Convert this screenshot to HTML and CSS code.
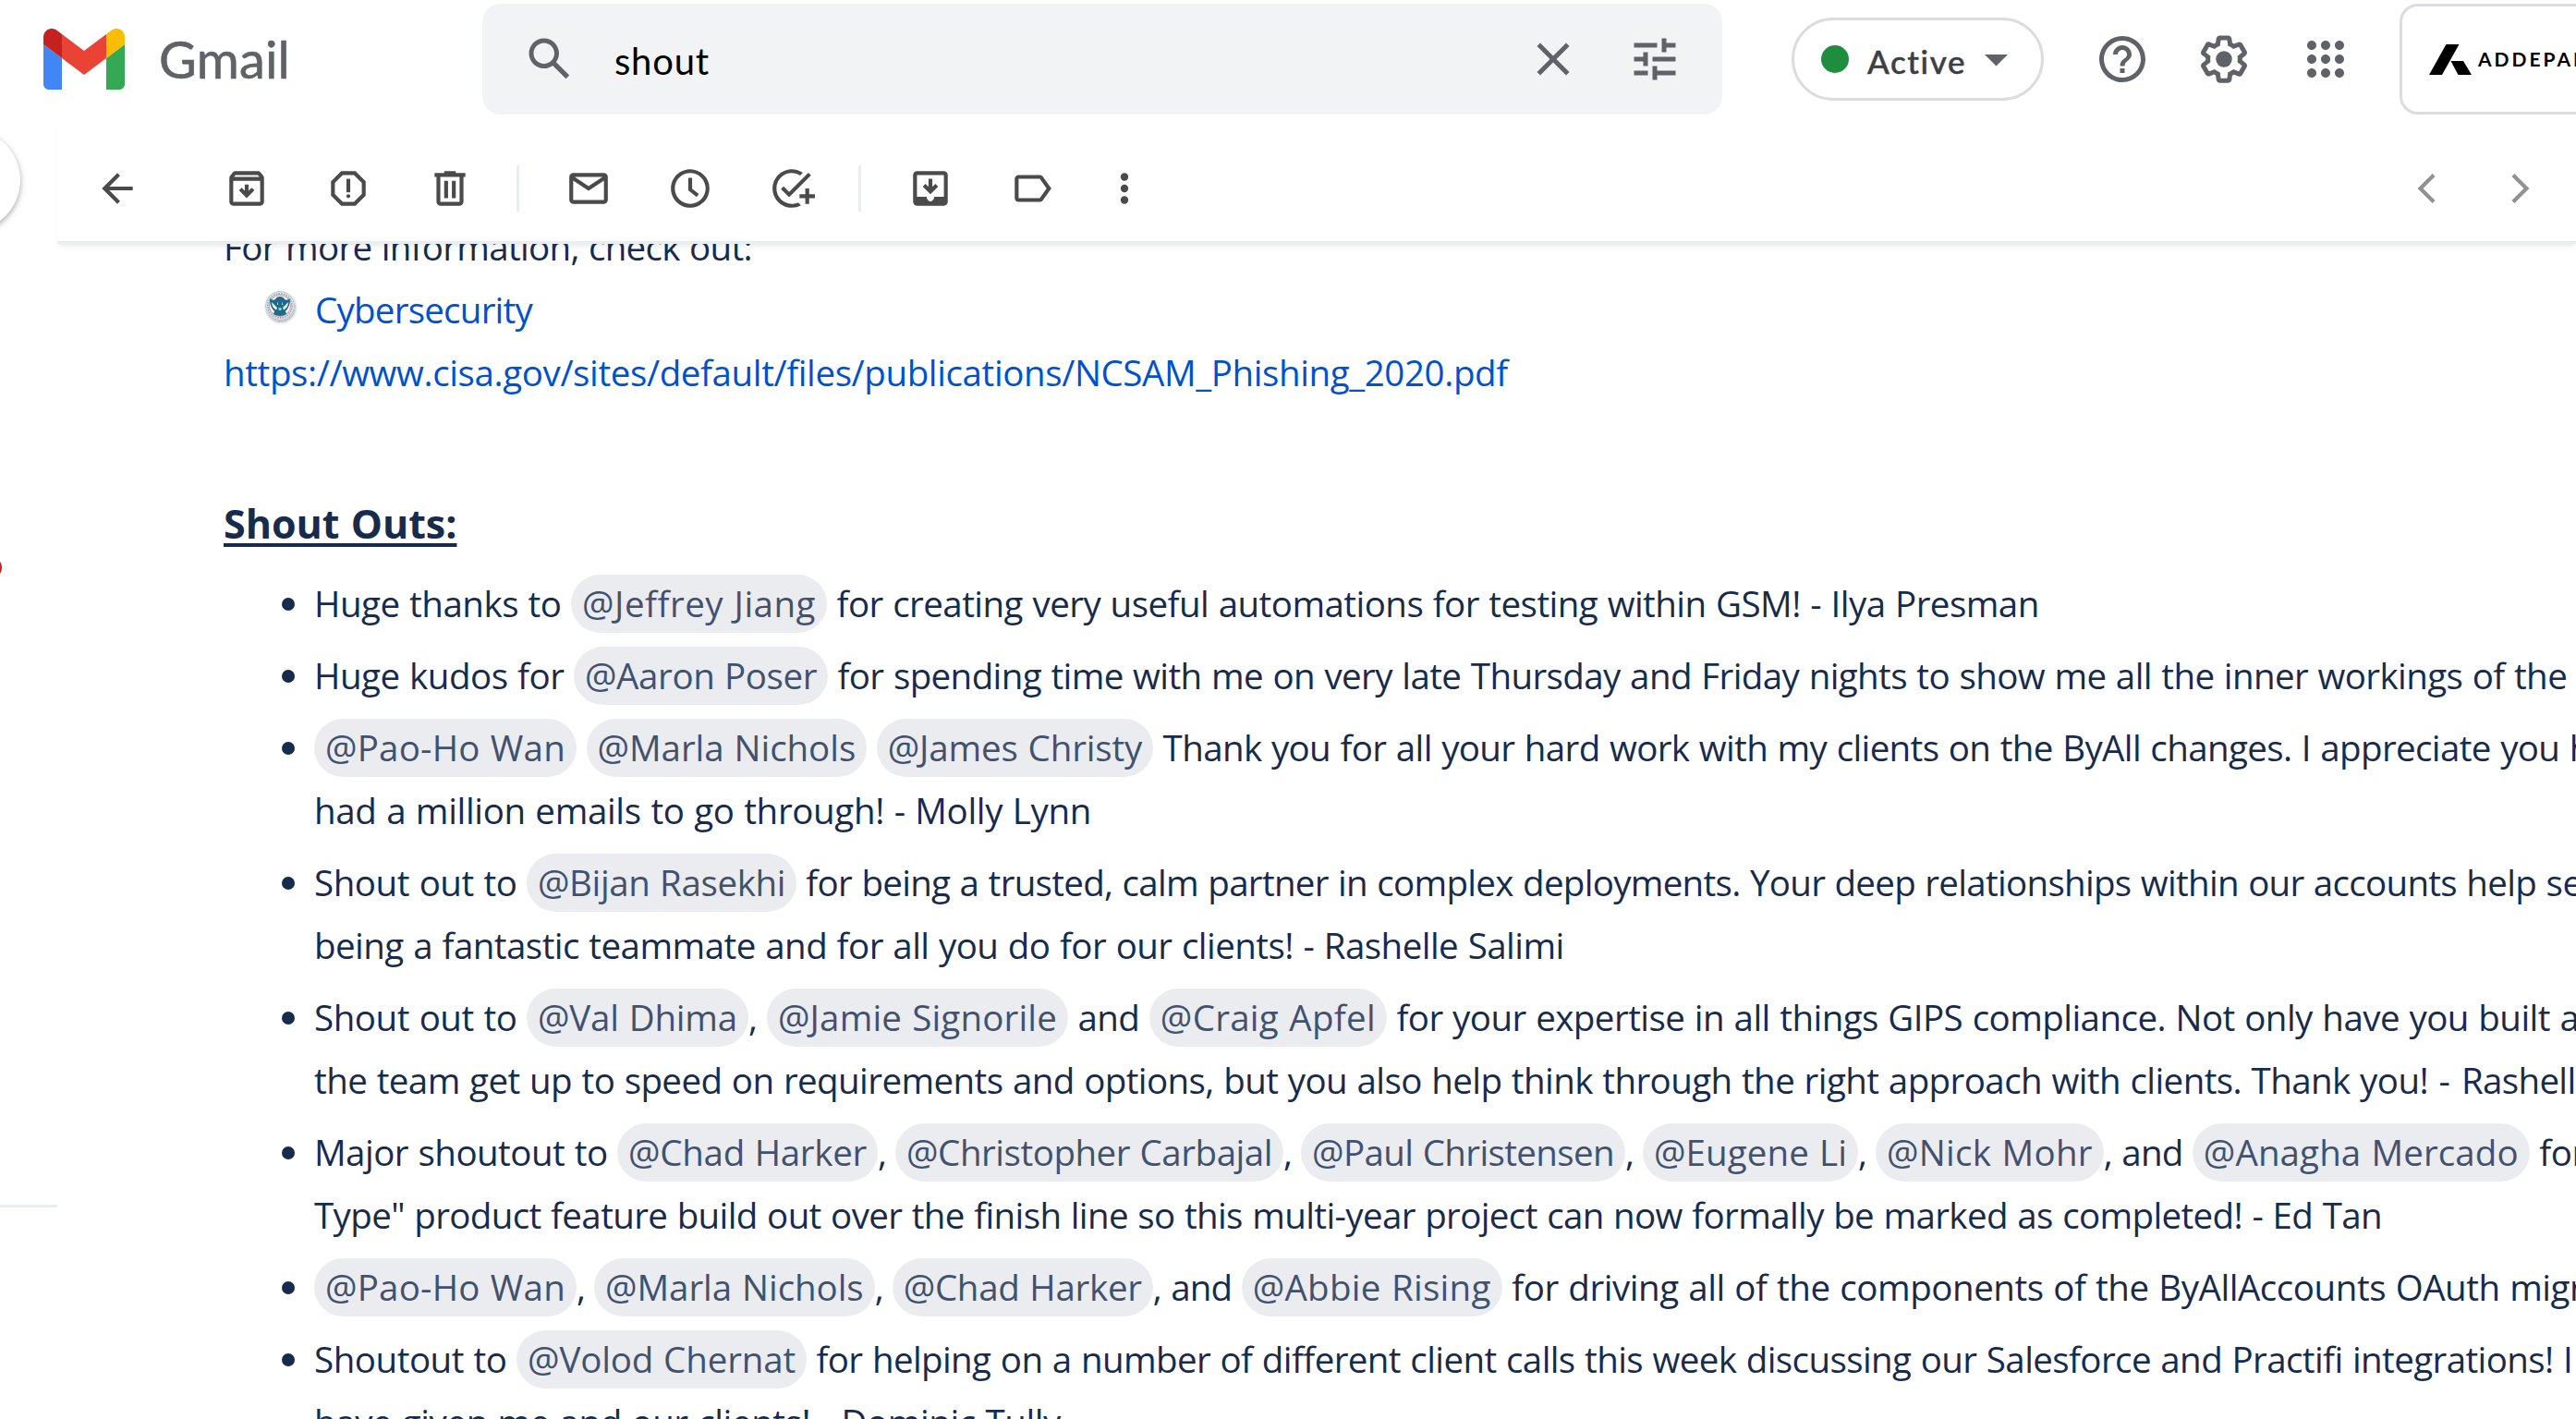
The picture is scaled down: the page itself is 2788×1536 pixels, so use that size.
FILE: index.html
```html
<!DOCTYPE html>
<html lang="en">
<head>
<meta charset="utf-8">
<title>Gmail</title>
<link rel="stylesheet" href="styles.css">
</head>
<body>
<header class="topbar">
  <div class="brand">
    <svg class="brand-mark" viewBox="52 42 88 66"><path fill="#4285f4" d="M58 108h14V74L52 59v43c0 3.32 2.69 6 6 6"/><path fill="#34a853" d="M120 108h14c3.32 0 6-2.69 6-6V59l-20 15"/><path fill="#fbbc04" d="M120 48v26l20-15v-8c0-7.42-8.47-11.65-14.4-7.2"/><path fill="#ea4335" d="M72 74V48l24 18 24-18v26L96 92"/><path fill="#c5221f" d="M52 51v8l20 15V48l-5.6-4.2c-5.94-4.45-14.4-.22-14.4 7.2"/></svg>
    <span class="brand-name">Gmail</span>
  </div>
  <div class="search">
    <svg class="icon" viewBox="0 0 24 24"><path d="M20.49 19l-5.73-5.73C15.53 12.2 16 10.91 16 9.5 16 5.91 13.09 3 9.5 3S3 5.91 3 9.5 5.91 16 9.5 16c1.41 0 2.7-.47 3.77-1.24L19 20.49 20.49 19zM5 9.5C5 7.01 7.01 5 9.5 5S14 7.01 14 9.5 11.99 14 9.5 14 5 11.99 5 9.5z"/></svg>
    <div class="search-text">shout</div>
    <svg class="icon" viewBox="0 0 24 24"><path d="M19 6.41L17.59 5 12 10.59 6.41 5 5 6.41 10.59 12 5 17.59 6.41 19 12 13.41 17.59 19 19 17.59 13.41 12z"/></svg>
    <svg class="icon" viewBox="0 0 24 24"><path d="M3 17v2h6v-2H3zM3 5v2h10V5H3zm10 16v-2h8v-2h-8v-2h-2v6h2zM7 9v2H3v2h4v2h2V9H7zm14 4v-2H11v2h10zm-6-4h2V7h4V5h-4V3h-2v6z"/></svg>
  </div>
  <div class="status"><i class="status-dot"></i><span class="status-text">Active</span><svg class="status-caret" viewBox="0 0 10 5"><path d="M0 0h10L5 5z"/></svg></div>
  <nav class="tools">
    <svg class="icon" viewBox="0 0 24 24"><path d="M11 18h2v-2h-2v2zm1-16C6.48 2 2 6.48 2 12s4.48 10 10 10 10-4.48 10-10S17.52 2 12 2zm0 18c-4.41 0-8-3.59-8-8s3.59-8 8-8 8 3.59 8 8-3.59 8-8 8zm0-14c-2.21 0-4 1.79-4 4h2c0-1.1.9-2 2-2s2 .9 2 2c0 2-3 1.75-3 5h2c0-2.25 3-2.5 3-5 0-2.21-1.79-4-4-4z"/></svg>
    <svg class="icon" viewBox="0 0 24 24"><path d="M13.85 22.25h-3.7c-.74 0-1.36-.54-1.45-1.27l-.27-1.89c-.27-.14-.53-.29-.79-.46l-1.8.72c-.7.26-1.47-.03-1.81-.65L2.2 15.53c-.35-.66-.2-1.44.36-1.88l1.53-1.19c-.01-.15-.02-.3-.02-.46 0-.15.01-.31.02-.46l-1.52-1.19c-.59-.45-.74-1.26-.37-1.88l1.85-3.19c.34-.62 1.11-.9 1.79-.63l1.81.73c.26-.17.52-.32.78-.46l.27-1.91c.09-.7.71-1.25 1.44-1.25h3.7c.74 0 1.36.54 1.45 1.27l.27 1.89c.27.14.53.29.79.46l1.8-.72c.71-.26 1.48.03 1.82.65l1.84 3.18c.36.66.2 1.44-.36 1.88l-1.52 1.19c.01.15.02.3.02.46s-.01.31-.02.46l1.52 1.19c.56.45.72 1.23.37 1.86l-1.86 3.22c-.34.62-1.11.9-1.8.63l-1.8-.72c-.26.17-.52.32-.78.46l-.27 1.91c-.1.68-.72 1.22-1.46 1.22zm-3.23-2h2.76l.37-2.55.53-.22c.44-.18.88-.44 1.34-.78l.45-.34 2.38.96 1.38-2.4-2.03-1.58.07-.56c.03-.26.06-.51.06-.78s-.03-.53-.06-.78l-.07-.56 2.03-1.58-1.39-2.4-2.39.96-.45-.35c-.42-.32-.87-.58-1.33-.77l-.52-.22-.37-2.55h-2.76l-.37 2.55-.53.21c-.44.19-.88.44-1.34.79l-.45.33-2.38-.95-1.39 2.39 2.03 1.58-.07.56a7 7 0 0 0-.06.79c0 .26.02.53.06.78l.07.56-2.03 1.58 1.38 2.4 2.39-.96.45.35c.43.33.86.58 1.33.77l.53.22.38 2.55z"/><circle cx="12" cy="12" r="3.5"/></svg>
    <svg class="icon" viewBox="0 0 24 24"><path d="M6 8c1.1 0 2-.9 2-2s-.9-2-2-2-2 .9-2 2 .9 2 2 2zm6 12c1.1 0 2-.9 2-2s-.9-2-2-2-2 .9-2 2 .9 2 2 2zm-6 0c1.1 0 2-.9 2-2s-.9-2-2-2-2 .9-2 2 .9 2 2 2zm0-6c1.1 0 2-.9 2-2s-.9-2-2-2-2 .9-2 2 .9 2 2 2zm6 0c1.1 0 2-.9 2-2s-.9-2-2-2-2 .9-2 2 .9 2 2 2zm4-8c0 1.1.9 2 2 2s2-.9 2-2-.9-2-2-2-2 .9-2 2zm-4 2c1.1 0 2-.9 2-2s-.9-2-2-2-2 .9-2 2 .9 2 2 2zm6 6c1.1 0 2-.9 2-2s-.9-2-2-2-2 .9-2 2 .9 2 2 2zm0 6c1.1 0 2-.9 2-2s-.9-2-2-2-2 .9-2 2 .9 2 2 2z"/></svg>
  </nav>
  <div class="account">
    <svg class="account-mark" viewBox="0 0 46 33"><path d="M18.5 0H32.5L14 33H0z"/><path d="M23.5 18H37L46 33H31.5z"/></svg>
    <span class="account-name">ADDEPAR</span>
  </div>
</header>

<div class="shell">
  <aside class="rail">
    <i class="compose"></i>
    <i class="badge"></i>
    <i class="rail-line"></i>
  </aside>
  <main class="main">
    <div class="toolbar">
      <svg class="tool tool-back" viewBox="0 0 24 24"><path d="M20 11H7.83l5.59-5.59L12 4l-8 8 8 8 1.41-1.41L7.83 13H20v-2z"/></svg>
      <div class="group">
        <svg class="tool" viewBox="0 0 24 24"><path fill-rule="evenodd" d="M20.54 5.23l-1.39-1.68C18.88 3.21 18.47 3 18 3H6c-.47 0-.88.21-1.16.55L3.46 5.23C3.17 5.57 3 6.02 3 6.5V19c0 1.1.9 2 2 2h14c1.1 0 2-.9 2-2V6.5c0-.48-.17-.93-.46-1.27zM6.24 5h11.52l.83 1H5.42l.82-1zM5 19V8h14v11H5z"/><path d="M11 10h2v3.17l1.59-1.58L16 13l-4 4-4-4 1.41-1.41L11 13.17z"/></svg>
        <svg class="tool" viewBox="0 0 24 24"><path fill-rule="evenodd" d="M15.73 3H8.27L3 8.27v7.46L8.27 21h7.46L21 15.73V8.27L15.73 3zM19 14.9L14.9 19H9.1L5 14.9V9.1L9.1 5h5.8L19 9.1v5.8z"/><circle cx="12" cy="16" r="1"/><path d="M11 7h2v7h-2z"/></svg>
        <svg class="tool" viewBox="0 0 24 24"><path d="M15 4V3H9v1H4v2h1v13c0 1.1.9 2 2 2h10c1.1 0 2-.9 2-2V6h1V4h-5zm2 15H7V6h10v13zM9 8h2v9H9zm4 0h2v9h-2z"/></svg>
      </div>
      <div class="group">
        <svg class="tool" viewBox="0 0 24 24"><path d="M20 4H4c-1.1 0-2 .9-2 2v12c0 1.1.9 2 2 2h16c1.1 0 2-.9 2-2V6c0-1.1-.9-2-2-2zm-.8 2L12 10.8 4.8 6h14.4zM4 18V7.87l8 5.33 8-5.33V18H4z"/></svg>
        <svg class="tool" viewBox="0 0 24 24"><path d="M11.99 2C6.47 2 2 6.48 2 12s4.47 10 9.99 10C17.52 22 22 17.52 22 12S17.52 2 11.99 2zM12 20c-4.42 0-8-3.58-8-8s3.58-8 8-8 8 3.58 8 8-3.58 8-8 8zm1-13.500h-2V13l4.300 3.400 1.200-1.500-3.500-2.800z"/></svg>
        <svg class="tool" viewBox="0 0 24 24"><path d="M22 5.18L10.59 16.6l-4.24-4.24 1.41-1.41 2.83 2.83 10-10L22 5.18zM12 20c-4.41 0-8-3.59-8-8s3.59-8 8-8c1.57 0 3.04.46 4.28 1.25l1.45-1.45C16.1 2.67 14.13 2 12 2 6.48 2 2 6.48 2 12s4.48 10 10 10c1.73 0 3.36-.44 4.78-1.22l-1.5-1.5c-1 .46-2.11.72-3.28.72zm7-5h-3v2h3v3h2v-3h3v-2h-3v-3h-2v3z"/></svg>
      </div>
      <div class="group">
        <svg class="tool" viewBox="0 0 24 24"><path fill-rule="evenodd" d="M19 3H5c-1.1 0-2 .9-2 2v14c0 1.1.9 2 2 2h14c1.1 0 2-.9 2-2V5c0-1.1-.9-2-2-2zM5 5h14v11.300h-5c0 1.100-.9 2.400-2 2.400s-2-1.300-2-2.400H5z"/><path d="M11 7h2v4.170l1.590-1.580L16 11l-4 4-4-4 1.410-1.410L11 11.170z"/></svg>
        <svg class="tool" viewBox="0 0 24 24"><path fill-rule="evenodd" d="M3 7c0-1.1.9-2 2-2h11c.67 0 1.27.33 1.63.84L22 12l-4.37 6.16c-.36.51-.96.84-1.63.84H5c-1.1 0-2-.9-2-2V7zm2 0v10h11l3.55-5L16 7H5z"/></svg>
      </div>
      <svg class="tool tool-more" viewBox="0 0 24 24"><circle cx="12" cy="6" r="2"/><circle cx="12" cy="12" r="2"/><circle cx="12" cy="18" r="2"/></svg>
      <div class="pager">
        <svg class="tool" viewBox="0 0 24 24"><path d="M15.400 5L8.400 12l7 7"/></svg>
        <svg class="tool" viewBox="0 0 24 24"><path d="M8.600 5l7 7-7 7"/></svg>
      </div>
    </div>

    <article class="message">
      <p><span class="n70">For more information, check out:</span></p>
      <p class="linked"><svg class="seal" viewBox="0 0 32 32"><circle cx="16" cy="16" r="16" fill="#b9bec4"/><circle cx="16" cy="16" r="15" fill="#dfe6ea"/><circle cx="16" cy="16" r="13" fill="none" stroke="#8fb0c2" stroke-width="2" stroke-dasharray="1.500 1.200"/><circle cx="16" cy="16" r="11.500" fill="#fff" stroke="#e58a9a" stroke-width="1"/><path fill="#1c6a8c" d="M5 8c3 2 4 2 6 1 1-4 9-4 10 0 2 1 3 1 6-1 0 7-2 11-5 14l1 3c-4 2.500-10 2.500-14 0l1-3C7 19 5 15 5 8z"/><path fill="#f0f7fa" d="M7 12l6 6-1 2.500C9 19 7 16 7 12zM25 12l-6 6 1 2.500c3-1.500 5-4.500 5-8.500zM13 11l1 4h-1zM19 11l-1 4h1z"/><circle cx="16" cy="19.500" r="1.700" fill="#a9d18a"/></svg><a href="#" class="n76">Cybersecurity</a></p>
      <p><a href="#" class="n39">https://www.cisa.gov/sites/default/files/publications/NCSAM_Phishing_2020.pdf</a></p>
      <h2>Shout Outs:</h2>
      <ul class="shouts">
        <li><span class="n49">Huge thanks to </span><b class="p50">@Jeffrey Jiang</b><span class="n54"> for creating very useful automations for testing within GSM! - Ilya Presman</span></li>
        <li><span class="n49">Huge kudos for </span><b class="n39">@Aaron Poser</b><span class="n60"> for spending time with me on very late Thursday and Friday nights to show me all the inner workings of the</span></li>
        <li><b class="p20">@Pao-Ho Wan</b> <b class="n05">@Marla Nichols</b> <b class="n14">@James Christy</b><span class="n62"> Thank you for all your hard work with my clients on the ByAll changes. I appreciate you</span> h<br><span class="n35">had a million emails to go through! - Molly Lynn</span></li>
        <li><span class="n43">Shout out to </span><b class="n39">@Bijan Rasekhi</b><span class="n70"> for being a trusted, calm partner in complex deployments. Your deep relationships within our accounts help</span> se<br><span class="n54">being a fantastic teammate and for all you do for our clients! - Rashelle Salimi</span></li>
        <li><span class="n43">Shout out to </span><b class="n19">@Val Dhima</b><span class="n52">, </span><b class="p15">@Jamie Signorile</b><span class="n52"> and </span><b class="p28">@Craig Apfel</b><span class="n54"> for your expertise in all things GIPS compliance. Not only have you built</span> a<br><span class="n58">the team get up to speed on requirements and options, but you also help think through the right approach with clients. Thank you!</span><span class="p50"> - </span><span class="n66">Rashelle</span></li>
        <li><span class="n52">Major shoutout to </span><b class="n28">@Chad Harker</b><span class="n98">, </span><b class="n46">@Christopher Carbajal</b><span class="n98">, </span><b class="n62">@Paul Christensen</b><span class="n98">, </span><b class="p09">@Eugene Li</b><span class="n98">, </span><b class="p28">@Nick Mohr</b><span class="n76">, and </span><b class="p11">@Anagha Mercado</b> for<br><span class="n62">Type" product feature build out over the finish line so this multi-year project can now formally be marked as completed! - Ed Tan</span></li>
        <li><b class="p20">@Pao-Ho Wan</b><span class="n98">, </span><b class="n05">@Marla Nichols</b><span class="n98">, </span><b class="n28">@Chad Harker</b><span class="n76">, and </span><b class="p28">@Abbie Rising</b><span class="n44"> for driving all of the components of the ByAllAccounts OAuth</span> migr</li>
        <li><span class="n46">Shoutout to </span><b class="n14">@Volod Chernat</b><span class="n60"> for helping on a number of different client calls this week discussing our Salesforce and Practifi integrations!</span> I<br><span class="n41">have given me and our clients! - Dominic Tully</span></li>
      </ul>
    </article>
  </main>
</div>
</body>
</html>
```
FILE: styles.css
```css
* { box-sizing: border-box; }
body {
  margin: 0;
  width: 2788px;
  height: 1536px;
  overflow: hidden;
  background: #fff;
  font-family: "Open Sans", "Noto Sans", sans-serif;
  color: #172b4d;
}
svg { display: block; flex: none; fill: currentColor; }

/* Top bar */
.topbar { display: flex; align-items: center; height: 128px; overflow: hidden; color: #5f6368; white-space: nowrap; }
.brand { display: flex; align-items: center; flex: none; width: 522px; padding-left: 47px; }
.brand-mark { width: 88px; height: 66px; }
.brand-name { margin-left: 37px; font: 400 56px/66px Lato, sans-serif; letter-spacing: .2px; -webkit-text-stroke: .6px #5f6368; }
.search { display: flex; align-items: center; flex: none; width: 1342px; height: 120px; padding: 0 43px; border-radius: 20px; background: #f1f3f4; }
.icon { width: 60px; height: 60px; }
.search-text { flex: 1; padding: 4px 0 0 40px; font: 400 40px/60px Lato, sans-serif; letter-spacing: .8px; color: #000; }
.search .icon:last-child { margin-left: 50px; }
.status { display: flex; align-items: center; flex: none; width: 273px; height: 90px; margin-left: 75px; padding-left: 29px; border: 3px solid #dadce0; border-radius: 45px; }
.status-dot { width: 30px; height: 30px; border-radius: 50%; background: #1e8e3e; }
.status-text { width: 109px; margin-left: 20px; padding-top: 4px; font: 500 35px/50px Lato, sans-serif; letter-spacing: 1.6px; color: #3c4043; -webkit-text-stroke: .5px #3c4043; }
.status-caret { width: 25px; height: 12.5px; margin: 3px 0 0 18px; }
.tools { display: flex; gap: 50px; margin: 0 50px 0 55px; }
.account { display: flex; align-items: center; flex: none; width: 240px; height: 120px; padding-left: 29px; border: 3px solid #dadce0; border-radius: 20px; color: #000; }
.account-mark { width: 46px; height: 33px; }
.account-name { margin-left: 7px; font: 700 21px/30px Lato, sans-serif; letter-spacing: 3px; }

/* Left rail */
.shell { display: flex; height: 1408px; }
.rail { position: relative; flex: none; width: 62px; }
.compose { position: absolute; left: -88px; top: 12px; width: 110px; height: 110px; border-radius: 50%; background: #fff; box-shadow: 0 2px 5px rgba(60, 64, 67, .35), 0 3px 10px rgba(60, 64, 67, .15); }
.badge { position: absolute; left: -21px; top: 475px; width: 22.5px; height: 22.5px; border-radius: 50%; background: #c5221f; }
.rail-line { position: absolute; left: 0; top: 1176px; width: 62px; height: 3px; background: #e8edf1; }

/* Toolbar */
.main { flex: 1; min-width: 0; display: flex; flex-direction: column; }
.toolbar { position: relative; z-index: 1; display: flex; align-items: center; flex: none; height: 136px; padding: 18px 36px 0 40px; border-bottom: 3px solid #e8edf0; background: #fff; box-shadow: 0 5px 5px -2px rgba(60, 64, 67, .1); color: #4a4a4a; }
.tool { width: 50px; height: 50px; }
.tool-back { margin-right: 90px; }
.group { display: flex; gap: 60px; }
.group + .group { margin-left: 47px; padding-left: 50px; border-left: 3px solid #e8edf1; }
.tool-more { margin-left: 50px; }
.pager { display: flex; gap: 50px; margin-left: auto; }
.pager path { fill: none; stroke: #919191; stroke-width: 2; }

/* Message */
.message { flex: 1; min-height: 0; overflow: hidden; padding-left: 180px; font-size: 38.5px; line-height: 68px; letter-spacing: -.5px; white-space: nowrap; word-spacing: 1px; }
.message p { margin: 0; }
.message p:first-child { margin-top: -31px; }
.message a { color: #0052cc; text-decoration: none; }
.linked { display: flex; }
.seal { width: 32px; height: 32px; margin: 14px 22px 0 45px; border-radius: 50%; box-shadow: 1px 2px 3px rgba(0, 0, 0, .3); }
h2 { width: max-content; margin: 96px 0 0; font-size: 43px; line-height: 68px; font-weight: 700; letter-spacing: 0; text-decoration: underline; text-decoration-thickness: 4px; text-underline-offset: 5px; }
.shouts { margin: 18px 0 0; padding: 0 0 0 98px; list-style: none; }
.shouts li { margin-bottom: 10px; white-space: pre; }
.shouts li::before { content: ""; display: inline-block; width: 14px; height: 14px; margin: 0 21px 0 -35px; border-radius: 50%; background: #172b4d; vertical-align: 7.5px; }
b { padding: 5px 12px 6px; border-radius: 32px; background: #ebecf0; color: #42526e; font-weight: 400; }

/* Tracking steps: n = tighter, p = wider, in hundredths of a pixel */
.n98 { letter-spacing: -.984px; }
.n76 { letter-spacing: -.76px; }
.n70 { letter-spacing: -.698px; }
.n66 { letter-spacing: -.665px; }
.n62 { letter-spacing: -.625px; }
.n60 { letter-spacing: -.6px; }
.n58 { letter-spacing: -.579px; }
.n54 { letter-spacing: -.542px; }
.n52 { letter-spacing: -.525px; }
.n49 { letter-spacing: -.487px; }
.n46 { letter-spacing: -.465px; }
.n44 { letter-spacing: -.443px; }
.n43 { letter-spacing: -.431px; }
.n41 { letter-spacing: -.409px; }
.n39 { letter-spacing: -.392px; }
.n35 { letter-spacing: -.348px; }
.n28 { letter-spacing: -.285px; }
.n19 { letter-spacing: -.189px; }
.n14 { letter-spacing: -.144px; }
.n05 { letter-spacing: -.05px; }
.p09 { letter-spacing: .091px; }
.p11 { letter-spacing: .113px; }
.p15 { letter-spacing: .154px; }
.p20 { letter-spacing: .207px; }
.p28 { letter-spacing: .28px; }
.p50 { letter-spacing: .5px; }
```
